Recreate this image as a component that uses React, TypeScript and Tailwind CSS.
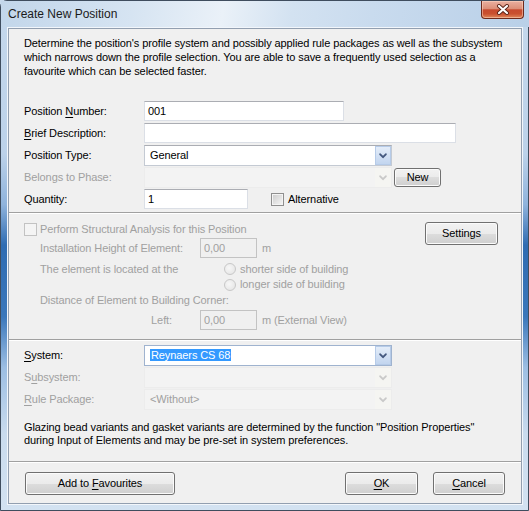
import React from "react";

function Chevron({ disabled }: { disabled?: boolean }) {
  return (
    <svg width="8" height="6" viewBox="0 0 8 6">
      <path
        d="M1.2 1.3 L4 4.2 L6.8 1.3"
        fill="none"
        stroke={disabled ? "#c9c9c9" : "#44587f"}
        strokeWidth="1.9"
        strokeLinecap="round"
        strokeLinejoin="round"
      />
    </svg>
  );
}

function Combo({ children, focused }: { children?: React.ReactNode; focused?: boolean }) {
  return (
    <div
      className={
        focused
          ? "mt-[1px] flex h-[21px] w-[248px] items-center border border-[#9fb3cf] bg-white pl-[5px]"
          : "mt-[1px] flex h-[21px] w-[248px] items-center border border-[#c4cad3] border-t-[#abadb3] bg-white pl-[5px]"
      }
    >
      <div className="flex-1 leading-[13px]">{children}</div>
      <div className="flex h-full w-[16px] items-center justify-center border border-[#b6cbe8] bg-[linear-gradient(180deg,#e4edf9_0%,#d3e1f4_50%,#c2d5ef_100%)]">
        <Chevron />
      </div>
    </div>
  );
}

function DisabledCombo({ children }: { children?: React.ReactNode }) {
  return (
    <div className="mt-[1px] flex h-[21px] w-[248px] items-center border border-[#ececec] bg-[#f3f3f3] pl-[5px] text-[#a0a0a0]">
      <div className="flex-1">{children}</div>
      <div className="flex h-full w-[16px] items-center justify-center bg-[#f5f5f2]">
        <Chevron disabled />
      </div>
    </div>
  );
}

function Input({ value, w }: { value?: string; w: string }) {
  return (
    <div
      className={`mt-[1px] flex h-[20px] items-center border border-[#dbdfe6] border-t-[#abadb3] bg-white pl-[3px] ${w}`}
    >
      {value}
    </div>
  );
}

function DisabledInput({ value }: { value: string }) {
  return (
    <div className="flex h-[20px] w-[57px] items-center border border-[#c3c3c3] bg-[#f0f0f0] pl-[3px] text-[#a0a0a0]">
      {value}
    </div>
  );
}

function Button({ children, w, h }: { children: React.ReactNode; w: string; h: string }) {
  return (
    <div
      className={`flex items-center justify-center rounded-[3px] border border-[#707070] bg-[linear-gradient(180deg,#f2f2f2_0%,#ebebeb_50%,#dddddd_50%,#cfcfcf_100%)] text-black shadow-[inset_0_0_0_1px_#fbfbfb] ${w} ${h}`}
    >
      {children}
    </div>
  );
}

function DisabledRadio() {
  return (
    <div className="h-[12px] w-[12px] rounded-full border border-[#c8c8c8] bg-[radial-gradient(circle_at_40%_40%,#f7f7f7,#e2e2e2)]" />
  );
}

function Separator({ className }: { className: string }) {
  return <div className={`h-[2px] border-y border-t-[#a0a0a0] border-b-white ${className}`} />;
}

function Row({ label, children, disabled }: { label: React.ReactNode; children: React.ReactNode; disabled?: boolean }) {
  return (
    <div className="flex h-[22px] items-start">
      <div className={disabled ? "w-[120px] leading-[22px] text-[#a0a0a0]" : "w-[120px] leading-[22px]"}>{label}</div>
      {children}
    </div>
  );
}

const U = ({ children }: { children: React.ReactNode }) => (
  <span className="underline decoration-1 underline-offset-[2px]">{children}</span>
);

export default function App() {
  return (
    <div className="relative h-[511px] w-[529px] overflow-hidden bg-[#c7d9ec] font-['Liberation_Sans',Arial,sans-serif] text-[11px] tracking-[-0.1px] text-black">
      <div className="flex h-full w-full flex-col rounded-t-[7px] border border-[#3f4d5e] bg-[linear-gradient(180deg,#c5d8ec_0%,#bcd2ea_30%,#8fb3dc_40%,#2f6cb2_48%,#3a77bb_62%,#9cbee3_72%,#c9dbee_85%,#d3e2f1_100%)] pb-[5px] pl-[6px] pr-[5px]">
        <div className="-mx-[6px] flex h-[26px] items-start justify-between bg-[linear-gradient(100deg,#c2d6ea_0%,#d6e4f2_25%,#eaf1f8_42%,#d3e2f1_55%,#c9dbee_70%,#b9d0e8_100%)] pl-[7px] pr-[5px]">
          <div className="font-['Liberation_Sans',Arial,sans-serif] text-[12px] leading-[26px] tracking-normal text-[#1b1b1b]">
            Create New Position
          </div>
          <div className="flex h-[18px] w-[43px] items-center justify-center rounded-b-[4px] border border-t-0 border-[#6e2a1c] bg-[linear-gradient(180deg,#eab0a0_0%,#dc8f78_45%,#c74a2e_52%,#c9502f_75%,#e0875a_100%)] shadow-[inset_0_0_0_1px_rgba(255,220,200,0.5)]">
            <svg width="14" height="11" viewBox="0 0 14 11">
              <path d="M3 2 L11 9 M11 2 L3 9" stroke="#5a2418" strokeWidth="4" strokeLinecap="round" />
              <path d="M3 2 L11 9 M11 2 L3 9" stroke="#ffffff" strokeWidth="2.2" strokeLinecap="round" />
            </svg>
          </div>
        </div>
        <div className="flex flex-1 flex-col border border-[#f2f6fb]">
          <div className="flex flex-1 flex-col border border-[#929fb0] bg-[#f0f0f0]">
            {/* Section 1 */}
            <div className="pl-[15px]">
              <p className="mt-[7px] whitespace-nowrap leading-[14px]">
                Determine the position's profile system and possibly applied rule packages as well as the subsystem
                <br />
                which narrows down the profile selection. You are able to save a frequently used selection as a
                <br />
                favourite which can be selected faster.
              </p>
              <div className="mt-[22px] flex flex-col">
                <Row
                  label={
                    <>
                      Position <U>N</U>umber:
                    </>
                  }
                >
                  <Input value="001" w="w-[200px]" />
                </Row>
                <Row
                  label={
                    <>
                      <U>B</U>rief Description:
                    </>
                  }
                >
                  <Input w="w-[312px]" />
                </Row>
                <Row label="Position Type:">
                  <Combo>General</Combo>
                </Row>
                <Row label="Belongs to Phase:" disabled>
                  <DisabledCombo />
                  <div className="ml-[2px] mt-[2px]">
                    <Button w="w-[47px]" h="h-[19px]">
                      New
                    </Button>
                  </div>
                </Row>
                <Row label="Quantity:">
                  <Input value="1" w="w-[104px]" />
                  <div className="ml-[23px] flex h-[22px] items-center">
                    <div className="flex h-[13px] w-[13px] items-center justify-center border border-[#8f8f8f] bg-[#f4f4f4]">
                      <div className="h-[9px] w-[9px] bg-[linear-gradient(135deg,#cfcfcf,#f3f3f3)]" />
                    </div>
                    <span className="ml-[4px]">Alternative</span>
                  </div>
                </Row>
              </div>
            </div>
            <Separator className="mt-[2px]" />

            {/* Section 2 */}
            <div className="flex pb-[8px] pl-[15px] pr-[23px] pt-[8px]">
              <div className="flex flex-1 flex-col text-[#a0a0a0]">
                <div className="flex h-[15px] items-center">
                  <div className="h-[13px] w-[13px] border border-[#c2c2c2] bg-[#f4f4f4]" />
                  <span className="ml-[3px]">Perform Structural Analysis for this Position</span>
                </div>
                <div className="flex h-[22px] items-center pl-[16px]">
                  <span className="w-[160px]">Installation Height of Element:</span>
                  <DisabledInput value="0,00" />
                  <span className="ml-[5px]">m</span>
                </div>
                <div className="mt-[2px] flex h-[16px] items-center pl-[16px]">
                  <span className="w-[184px]">The element is located at the</span>
                  <DisabledRadio />
                  <span className="ml-[4px]">shorter side of building</span>
                </div>
                <div className="flex h-[15px] items-center pl-[200px]">
                  <DisabledRadio />
                  <span className="ml-[4px]">longer side of building</span>
                </div>
                <div className="flex h-[16px] items-center pl-[16px]">
                  <span>Distance of Element to Building Corner:</span>
                </div>
                <div className="mt-[1px] flex h-[22px] items-center">
                  <span className="w-[176px] pr-[28px] text-right">Left:</span>
                  <DisabledInput value="0,00" />
                  <span className="ml-[5px]">m (External View)</span>
                </div>
              </div>
              <Button w="w-[73px]" h="h-[23px]">
                Settings
              </Button>
            </div>
            <Separator className="" />

            {/* Section 3 */}
            <div className="pl-[15px] pt-[3px]">
              <Row
                label={
                  <>
                    <U>S</U>ystem:
                  </>
                }
              >
                <Combo focused>
                  <span className="bg-[#3399ff] px-[1px] text-white">Reynaers CS 68</span>
                </Combo>
              </Row>
              <Row
                disabled
                label={
                  <>
                    S<U>u</U>bsystem:
                  </>
                }
              >
                <DisabledCombo />
              </Row>
              <Row
                disabled
                label={
                  <>
                    <U>R</U>ule Package:
                  </>
                }
              >
                <DisabledCombo>&lt;Without&gt;</DisabledCombo>
              </Row>
              <p className="mt-[11px] whitespace-nowrap leading-[13px]">
                Glazing bead variants and gasket variants are determined by the function "Position Properties"
                <br />
                during Input of Elements and may be pre-set in system preferences.
              </p>
            </div>
            <Separator className="mt-[14px]" />

            {/* Section 4 */}
            <div className="flex flex-1 items-start pl-[16px] pr-[16px] pt-[9px]">
              <Button w="w-[150px]" h="h-[23px]">
                <span>
                  Add to <U>F</U>avourites
                </span>
              </Button>
              <div className="flex-1" />
              <Button w="w-[73px]" h="h-[23px]">
                <U>O</U>K
              </Button>
              <div className="w-[15px]" />
              <Button w="w-[72px]" h="h-[23px]">
                <span>
                  <U>C</U>ancel
                </span>
              </Button>
            </div>
          </div>
        </div>
      </div>
    </div>
  );
}
